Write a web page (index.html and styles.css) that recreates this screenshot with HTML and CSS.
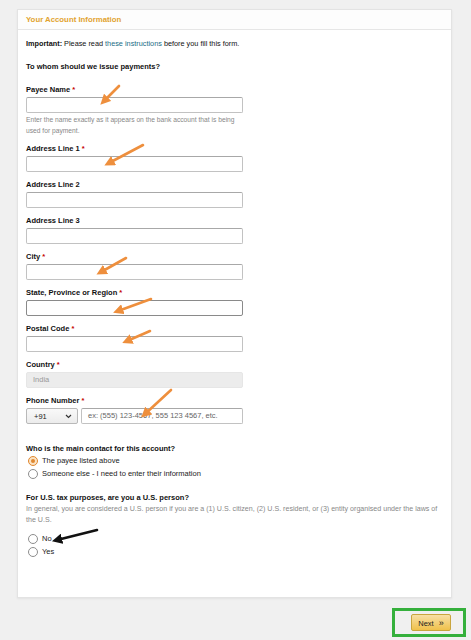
FILE: index.html
```html
<!DOCTYPE html>
<html lang="en">
<head>
  <meta charset="UTF-8" />
  <meta name="viewport" content="width=device-width, initial-scale=1.0"/>
  <title>Your Account Information</title>
  <link rel="stylesheet" href="styles.css">
</head>
<body>
  <div class="card">
    <div class="card-head">Your Account Information</div>
    <div class="card-body">
      <p class="note"><b>Important:</b> Please read <a href="#">these instructions</a> before you fill this form.</p>
      <p class="question">To whom should we issue payments?</p>

      <div class="field">
        <label>Payee Name <span class="req">*</span></label>
        <div class="input"></div>
        <p class="hint">Enter the name exactly as it appears on the bank account that is being used for payment.</p>
      </div>
      <div class="field">
        <label>Address Line 1 <span class="req">*</span></label>
        <div class="input"></div>
      </div>
      <div class="field">
        <label>Address Line 2</label>
        <div class="input"></div>
      </div>
      <div class="field">
        <label>Address Line 3</label>
        <div class="input"></div>
      </div>
      <div class="field">
        <label>City <span class="req">*</span></label>
        <div class="input"></div>
      </div>
      <div class="field">
        <label>State, Province or Region <span class="req">*</span></label>
        <div class="input dark"></div>
      </div>
      <div class="field">
        <label>Postal Code <span class="req">*</span></label>
        <div class="input"></div>
      </div>
      <div class="field">
        <label>Country <span class="req">*</span></label>
        <div class="input disabled">India</div>
      </div>
      <div class="field">
        <label>Phone Number <span class="req">*</span></label>
        <div class="phone">
          <div class="select">+91
            <svg width="7" height="5" viewBox="0 0 7 5"><path d="M1 1l2.5 2.5L6 1" fill="none" stroke="#333" stroke-width="1.2"/></svg>
          </div>
          <div class="input grow placeholder">ex: (555) 123-4567, 555 123 4567, etc.</div>
        </div>
      </div>

      <div class="group">
        <p class="question">Who is the main contact for this account?</p>
        <div class="radio"><span class="dot on"></span>The payee listed above</div>
        <div class="radio"><span class="dot"></span>Someone else - I need to enter their information</div>
      </div>

      <div class="group tight">
        <p class="question">For U.S. tax purposes, are you a U.S. person?</p>
        <p class="hint wide">In general, you are considered a U.S. person if you are a (1) U.S. citizen, (2) U.S. resident, or (3) entity organised under the laws of the U.S.</p>
        <div class="radio first"><span class="dot"></span>No</div>
        <div class="radio"><span class="dot"></span>Yes</div>
      </div>
    </div>
  </div>

  <div class="actions">
    <div class="highlight">
      <button class="next">Next <span class="chev">&raquo;</span></button>
    </div>
  </div>

  <!-- annotation arrows drawn over the form -->
  <svg class="marks" width="471" height="640" viewBox="0 0 471 640">
    <defs>
      <marker id="head" markerWidth="4" markerHeight="4" refX="2" refY="2" orient="auto" markerUnits="strokeWidth">
        <path d="M0 0L4 2L0 4z" fill="#ee8f3d"/>
      </marker>
      <marker id="headk" markerWidth="4" markerHeight="4" refX="2" refY="2" orient="auto" markerUnits="strokeWidth">
        <path d="M0 0L4 2L0 4z" fill="#111"/>
      </marker>
    </defs>
    <g stroke="#ee8f3d" stroke-width="2.6" stroke-linecap="round" marker-end="url(#head)">
      <line x1="119" y1="86" x2="104" y2="101"/>
      <line x1="143" y1="145" x2="109" y2="163"/>
      <line x1="126" y1="258" x2="101" y2="272"/>
      <line x1="151" y1="299" x2="118" y2="311"/>
      <line x1="150" y1="331" x2="127" y2="341"/>
      <line x1="171" y1="390" x2="145" y2="414"/>
    </g>
    <line x1="97" y1="530" x2="57" y2="540" stroke="#111" stroke-width="2.6" stroke-linecap="round" marker-end="url(#headk)"/>
  </svg>
</body>
</html>
```
FILE: styles.css
```css
body {
  margin: 0;
  background: #f0f0f0;
  font-family: "Liberation Sans", Arial, sans-serif;
  font-size: 7.5px;
  color: #111;
  width: 471px;
  height: 640px;
  position: relative;
}
p {
  margin: 0;
}
.card {
  margin: 9px 0 0 17px;
  width: 433px;
  background: #fff;
  border: 1px solid #e3e3e3;
  box-shadow: 0 1px 2px rgba(0, 0, 0, 0.06);
}
.card-head {
  height: 19px;
  line-height: 19px;
  padding-left: 8px;
  color: #e2a32e;
  font-weight: bold;
  font-size: 7.8px;
  border-bottom: 1px solid #e6e6e6;
  background: #fdfdfd;
}
.card-body {
  padding: 9px 8px 39px 8px;
}
.note {
  line-height: 10px;
  font-size: 7.3px;
}
.note a {
  color: #1b6d85;
  text-decoration: none;
}
.question {
  font-weight: bold;
  line-height: 10px;
  margin-top: 13px;
}
.field {
  margin-top: 8px;
}
.field:first-of-type {
  margin-top: 13px;
}
label {
  display: block;
  font-weight: bold;
  line-height: 10px;
  margin-bottom: 2px;
}
.req {
  color: #c40000;
}
.input {
  height: 14px;
  width: 209px;
  border: 1px solid #c2c2c2;
  border-top-color: #a8a8a8;
  border-radius: 2px;
  background: #fff;
  line-height: 14px;
  padding-left: 6px;
  color: #999;
}
.input.dark {
  border-color: #8a8a8a;
}
.input.disabled {
  background: #ececec;
  border-color: #e6e6e6;
  color: #999;
}
.hint {
  color: #888;
  font-size: 6.7px;
  line-height: 11px;
  margin-top: 1px;
  width: 217px;
}
.hint.wide {
  width: 418px;
  font-size: 7.1px;
  margin-top: 1px;
}
.phone {
  display: flex;
  gap: 3px;
  width: 217px;
}
.select {
  width: 52px;
  height: 16px;
  box-sizing: border-box;
  border: 1px solid #b9b9b9;
  border-radius: 2px;
  background: linear-gradient(#f9f9f9, #ececec);
  display: flex;
  align-items: center;
  justify-content: space-between;
  padding: 0 5px 0 7px;
  color: #222;
}
.input.grow {
  flex: 1;
  width: auto;
  color: #666;
}
.group {
  margin-top: 20px;
}
.group.tight {
  margin-top: 13px;
}
.group .question {
  margin-top: 0;
}
.radio {
  display: flex;
  align-items: center;
  line-height: 13px;
  color: #222;
}
.radio.first {
  margin-top: 6px;
}
.dot {
  width: 8px;
  height: 8px;
  border: 1px solid #8d8d8d;
  border-radius: 50%;
  margin: 0 4px 0 2px;
  background: #fff;
  position: relative;
}
.dot.on {
  border-color: #e0872f;
  background: #fbe3c4;
}
.dot.on::after {
  content: "";
  position: absolute;
  left: 2px;
  top: 2px;
  width: 4px;
  height: 4px;
  border-radius: 50%;
  background: #e0872f;
}
.actions {
  display: flex;
  justify-content: flex-end;
  padding: 10px 5px 0 0;
}
.highlight {
  border: 3px solid #35b03c;
  padding: 3px 12px 3px 16px;
}
.next {
  width: 40px;
  height: 17px;
  padding: 0;
  font-family: "Liberation Sans", Arial, sans-serif;
  font-size: 7.5px;
  color: #222;
  background: linear-gradient(#f7dfa5, #f0c14b);
  border: 1px solid #c9a53e;
  border-radius: 2px;
}
.chev {
  margin-left: 3px;
  font-size: 9px;
}
.marks {
  position: absolute;
  left: 0;
  top: 0;
  pointer-events: none;
}
```
